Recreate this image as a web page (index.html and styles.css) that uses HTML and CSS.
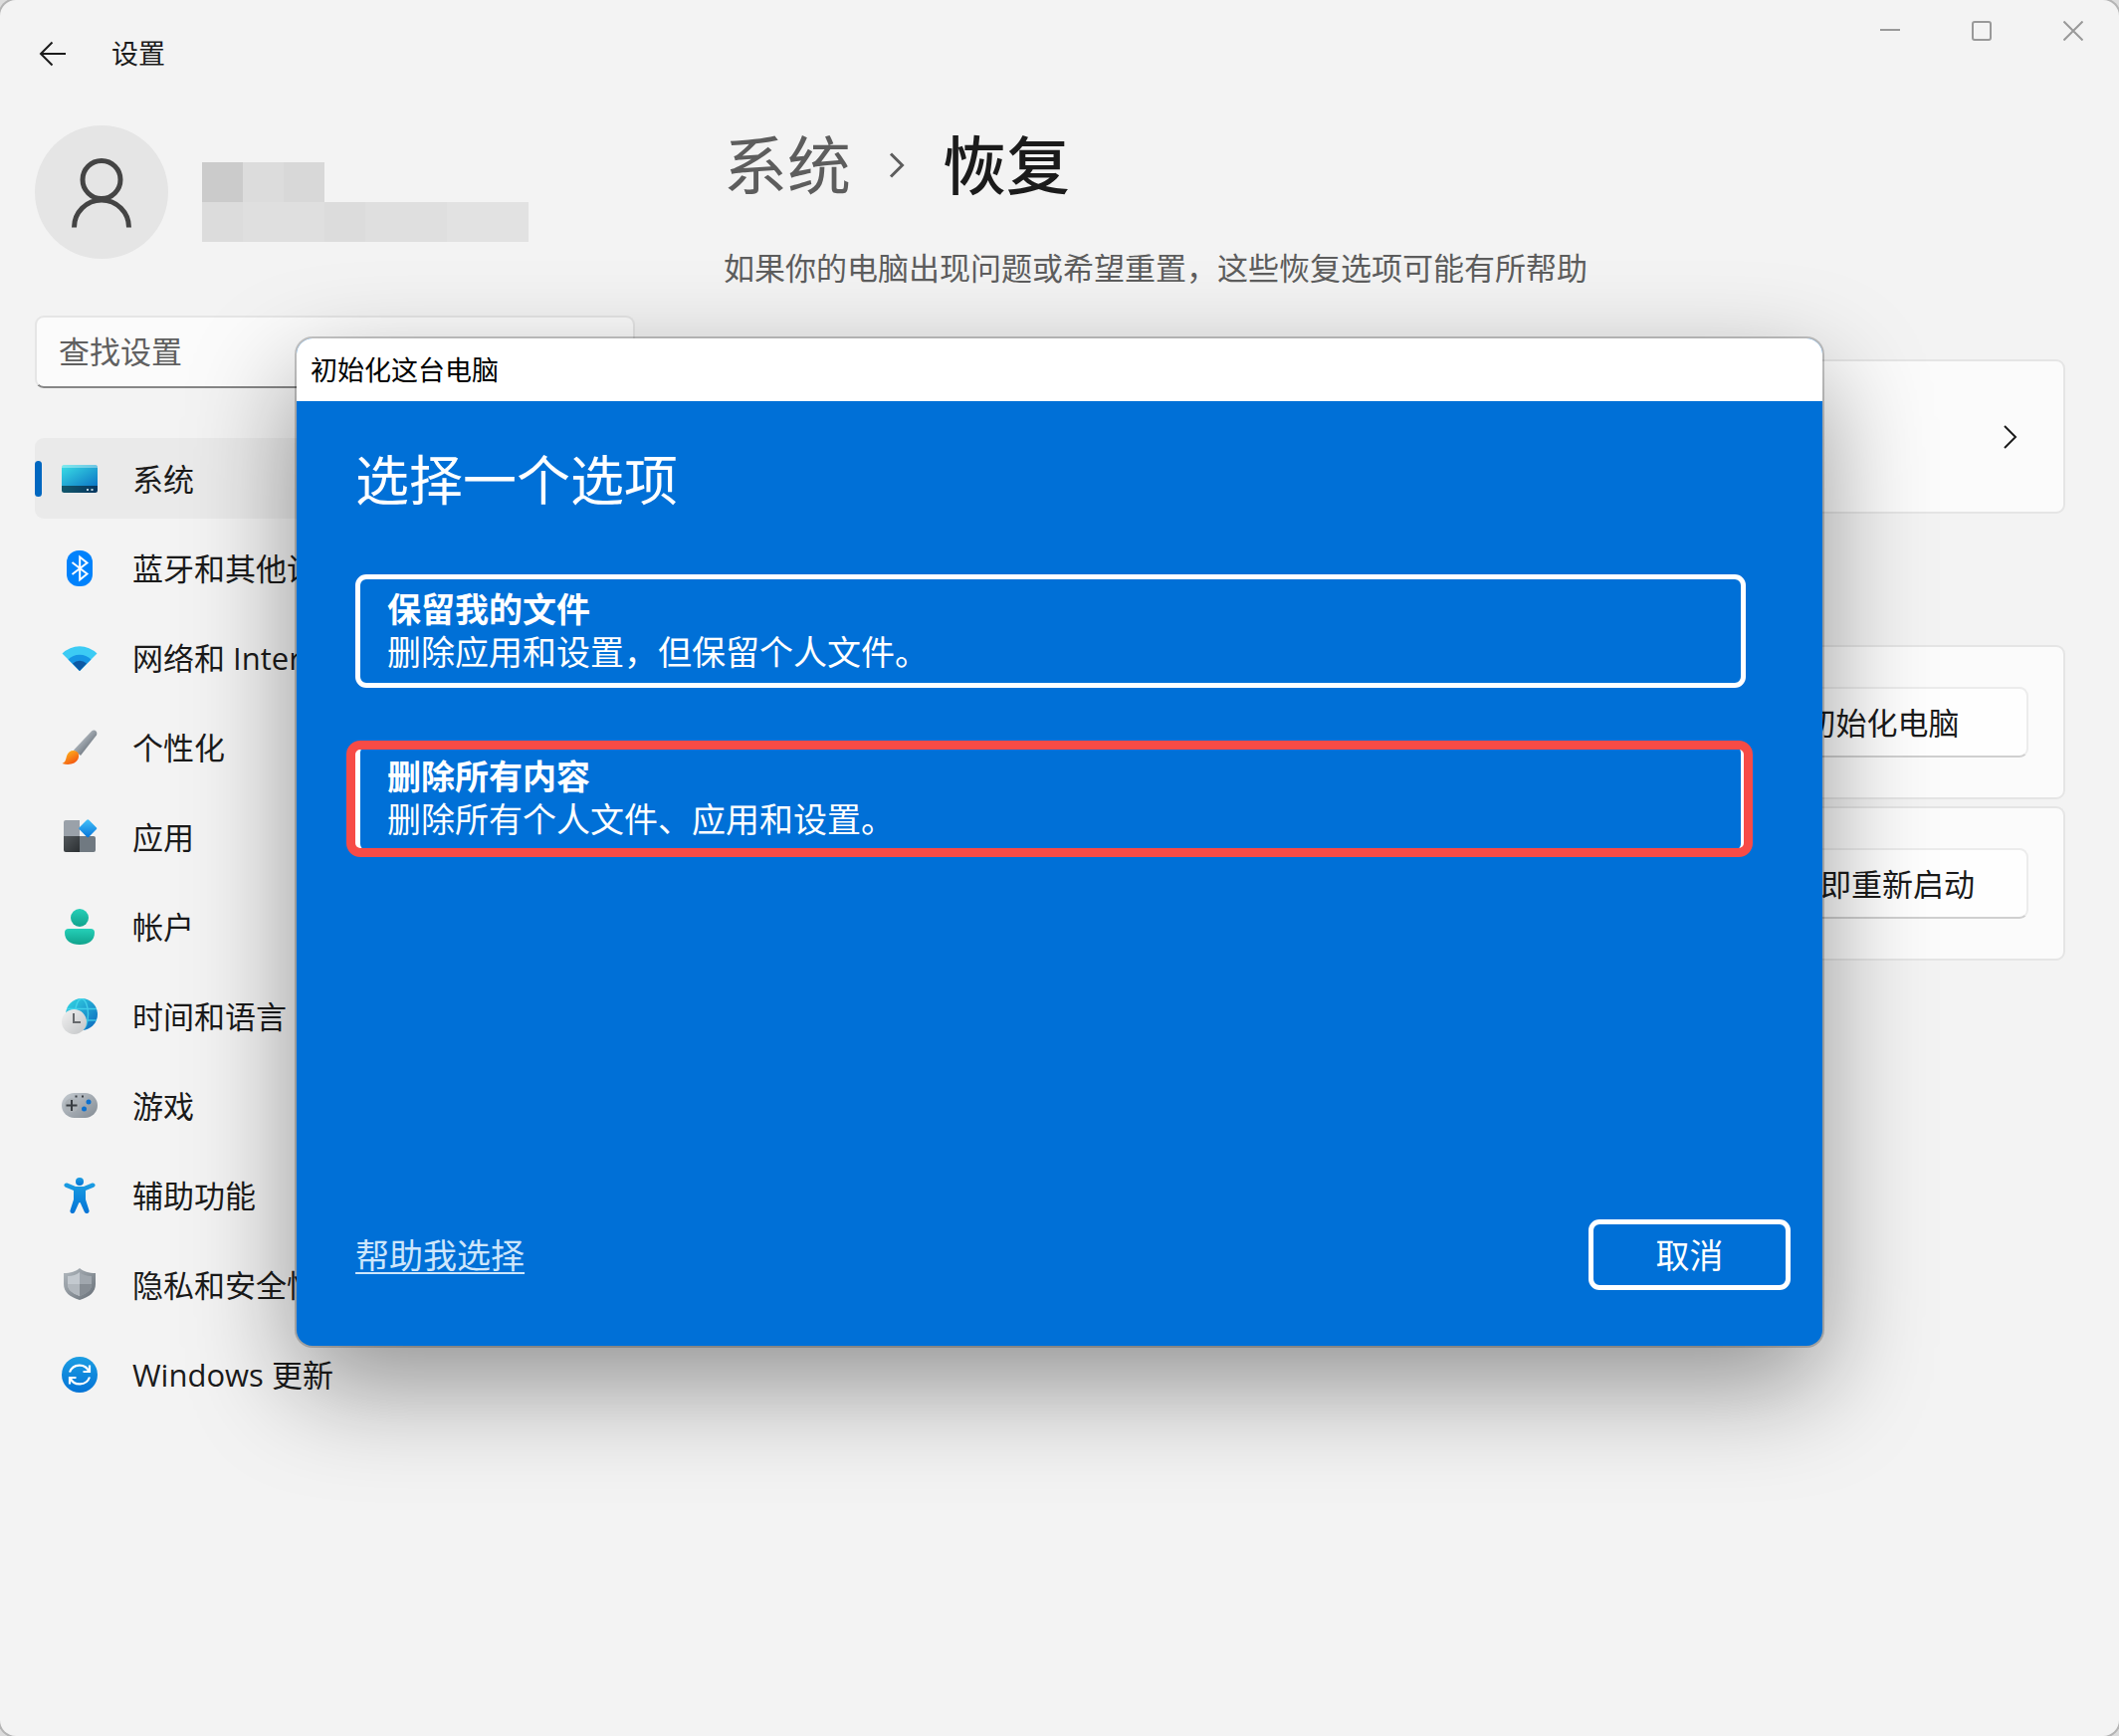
FILE: index.html
```html
<!DOCTYPE html>
<html lang="zh-CN">
<head>
<meta charset="utf-8">
<meta name="viewport" content="width=device-width, initial-scale=1">
<title>设置</title>
<link rel="stylesheet" href="styles.css">
</head>
<body>
<div class="window">
  <header class="titlebar">
    <button class="back" aria-label="返回">
      <svg width="28" height="28" viewBox="0 0 28 28"><path d="M27 14H2M13.500 2.500L2 14l11.500 11.500"/></svg>
    </button>
    <span class="app-name">设置</span>
    <div class="controls">
      <button aria-label="最小化"><svg width="20" height="20" viewBox="0 0 20 20"><path d="M0 9h20"/></svg></button>
      <button aria-label="最大化"><svg width="20" height="20" viewBox="0 0 20 20"><rect x="1" y="1" width="18" height="18" rx="2"/></svg></button>
      <button aria-label="关闭"><svg width="20" height="20" viewBox="0 0 20 20"><path d="M.5.5l19 19M19.500.5l-19 19"/></svg></button>
    </div>
  </header>

  <div class="layout">
    <aside class="sidebar">
      <div class="account">
        <div class="avatar">
          <svg width="64" height="72" viewBox="0 0 64 72"><circle cx="32" cy="23.500" r="19"/><path d="M4.500 71.500a27.500 27.500 0 0 1 55 0"/></svg>
        </div>
        <div class="redacted" aria-hidden="true">
          <div class="redacted-row">
            <i class="t1"></i><i class="t3"></i><i class="t2"></i>
          </div>
          <div class="redacted-row">
            <i class="t3"></i><i class="t4"></i><i class="t4"></i><i class="t3"></i><i class="t4"></i><i class="t4"></i><i class="t5"></i><i class="t5"></i>
          </div>
        </div>
      </div>
      <input class="search" type="text" placeholder="查找设置" aria-label="查找设置">
      <nav class="nav">
        <a href="#" class="active">
          <svg viewBox="0 0 36 36"><defs><linearGradient id="sys" x1="0" y1="0" x2="1" y2="1"><stop offset="0" stop-color="#3be0e6"/><stop offset="1" stop-color="#0b74c4"/></linearGradient><linearGradient id="sysb" x1="0" x2="1" y1="0" y2="0"><stop offset="0" stop-color="#12586c"/><stop offset="1" stop-color="#06365f"/></linearGradient><clipPath id="sysc"><rect y="4" width="36" height="28" rx="2.500"/></clipPath></defs><g clip-path="url(#sysc)"><rect y="4" width="36" height="22" fill="url(#sys)"/><rect y="4" width="36" height="3" fill="#fff" opacity=".35"/><rect y="25" width="36" height="7" fill="url(#sysb)"/></g><path d="M25 28h2v2h-2zM29.500 28h2v2h-2z" fill="#bcd3df"/></svg>
          <span>系统</span>
        </a>
        <a href="#">
          <svg viewBox="0 0 36 36"><rect x="5" width="26" height="36" rx="12" fill="#0082fc"/><path d="M10.500 12l15 11.500-7.300 6V6.500l7.300 6L10.500 24" fill="none" stroke="#fff" stroke-width="2"/></svg>
          <span>蓝牙和其他设备</span>
        </a>
        <a href="#">
          <svg viewBox="0 0 36 36"><path d="M18 31L.5 13.500a25 25 0 0 1 35 0z" fill="#3ccbf4"/><path d="M18 31L6.500 19.500a16.500 16.500 0 0 1 23 0z" fill="#1595e4"/><path d="M18 31l-7-7.500a10.500 10.500 0 0 1 14 0z" fill="#0c59a4"/></svg>
          <span>网络和 Internet</span>
        </a>
        <a href="#">
          <svg viewBox="0 0 36 36"><defs><linearGradient id="br" x1="0" y1="0" x2="1" y2="1"><stop offset=".3" stop-color="#b3bac1"/><stop offset=".7" stop-color="#717a83"/></linearGradient><linearGradient id="fl" x1="0" y1="0" x2=".7" y2="1"><stop offset="0" stop-color="#ffc522"/><stop offset="1" stop-color="#f2520f"/></linearGradient></defs><path d="M30 1.500c3-2.500 6.500.5 5 4L19 26l-7-5.500z" fill="url(#br)"/><path d="M12 21c4.500 1 5.500 3 5 6.500C16 34 7.500 36.500.5 34c3.500-1.500 3.500-4 4.500-7.500C6 23 8.500 21 12 21z" fill="url(#fl)"/></svg>
          <span>个性化</span>
        </a>
        <a href="#">
          <svg viewBox="0 0 36 36"><defs><linearGradient id="ap" x1="0" y1="0" x2="1" y2="1"><stop offset="0" stop-color="#46c3fa"/><stop offset="1" stop-color="#0473d9"/></linearGradient><linearGradient id="ap2" x1="0" y1="0" x2="1" y2="1"><stop offset="0" stop-color="#53585c"/><stop offset="1" stop-color="#2b2f32"/></linearGradient></defs><path d="M2 17V3a2 2 0 0 1 2-2h14v16z" fill="#9aa1a9"/><path d="M18 17h14a2 2 0 0 1 2 2v12a2 2 0 0 1-2 2H18z" fill="#707981"/><path d="M2 17h16v16H4a2 2 0 0 1-2-2z" fill="url(#ap2)"/><rect x="19.500" y="2.500" width="13.500" height="13.500" rx="1.500" transform="rotate(45 26.250 9.250)" fill="url(#ap)"/></svg>
          <span>应用</span>
        </a>
        <a href="#">
          <svg viewBox="0 0 36 36"><defs><linearGradient id="ac" x1="0" y1="0" x2="0" y2="1"><stop offset="0" stop-color="#25d0b8"/><stop offset="1" stop-color="#10a28c"/></linearGradient></defs><circle cx="18" cy="9" r="9" fill="url(#ac)"/><path d="M7 20h22a4 4 0 0 1 4 4c0 8-6 12-15 12S3 32 3 24a4 4 0 0 1 4-4z" fill="url(#ac)"/></svg>
          <span>帐户</span>
        </a>
        <a href="#">
          <svg viewBox="0 0 36 36"><defs><linearGradient id="gl" x1="0" y1="0" x2="1" y2="1"><stop offset="0" stop-color="#35dbe4"/><stop offset="1" stop-color="#0a63bd"/></linearGradient><linearGradient id="ck" x1="0" y1="0" x2="1" y2="1"><stop offset="0" stop-color="#f2f2f2"/><stop offset="1" stop-color="#c2c4c6"/></linearGradient></defs><circle cx="20" cy="16" r="16" fill="url(#gl)"/><g fill="none" stroke="#4fe0f2" stroke-width="1.500" opacity=".7"><ellipse cx="20" cy="16" rx="6.500" ry="15.500"/><path d="M5 10.500h30M5 22h30"/></g><circle cx="12.500" cy="23.500" r="12.500" fill="url(#ck)"/><path d="M12 15v9h7" fill="none" stroke="#66696c" stroke-width="2"/></svg>
          <span>时间和语言</span>
        </a>
        <a href="#">
          <svg viewBox="0 0 36 36"><defs><linearGradient id="gm" x1="0" y1="0" x2="1" y2="1"><stop offset="0" stop-color="#c5cbd1"/><stop offset="1" stop-color="#838b93"/></linearGradient></defs><rect y="5" width="36" height="25" rx="12.500" fill="url(#gm)"/><circle cx="10" cy="17.500" r="7" fill="#aab0b5"/><path d="M4.500 17.500h11M10 12v11" stroke="#383d42" stroke-width="2"/><path d="M13.500 7.500h2v2h-2zM20 7.500h2v2h-2z" fill="#383d42"/><circle cx="27" cy="14" r="2.500" fill="#0b70cf"/><circle cx="22.500" cy="21" r="2.500" fill="#0b70cf"/></svg>
          <span>游戏</span>
        </a>
        <a href="#">
          <svg viewBox="0 0 36 36"><defs><linearGradient id="ax" x1="0" y1="0" x2="0" y2="1"><stop offset="0" stop-color="#1b9de2"/><stop offset="1" stop-color="#0473d6"/></linearGradient></defs><g fill="url(#ax)"><circle cx="18" cy="4" r="4"/><path d="M5.500 5.500L14 9h8l8.500-3.500c3-.8 4.500 3 1.500 4.300L24 13v9l3.500 11c.8 3-3.500 4.300-4.700 1.500L19 26c-.5-1.300-1.500-1.300-2 0l-3.800 8.500C12 37.300 7.700 36 8.500 33L12 22v-9L4 9.800C1 8.500 2.500 4.700 5.500 5.500z"/></g></svg>
          <span>辅助功能</span>
        </a>
        <a href="#">
          <svg viewBox="0 0 36 36"><defs><linearGradient id="sh" x1="0" y1="0" x2="1" y2="1"><stop offset="0" stop-color="#b3bac0"/><stop offset="1" stop-color="#666e76"/></linearGradient></defs><path d="M18 1c4 3.500 9 5 16 5v11c0 8-6 13-16 16C8 30 2 25 2 17V6c7 0 12-1.500 16-5z" fill="url(#sh)"/><path d="M18 5v24C10 26 6 22.500 6 17V9c5 0 9-1.500 12-4z" fill="#c3c9cf"/><path d="M18 5v24c8-3 12-6.500 12-12V9c-5 0-9-1.500-12-4z" fill="#a0a7ae"/><path d="M6 17h12v12C10 26 6 22.500 6 17z" fill="#b2b8be"/><path d="M30 17H18v12c8-3 12-6.500 12-12z" fill="#868d94"/></svg>
          <span>隐私和安全性</span>
        </a>
        <a href="#">
          <svg viewBox="0 0 36 36"><circle cx="18" cy="18" r="18" fill="url(#ax)"/><g fill="none" stroke="#fff" stroke-width="2.200"><path d="M8 15.500a10.500 10.500 0 0 1 19.500-.7M28 20.500a10.500 10.500 0 0 1-19.500.7"/><path d="M28 8.500v6.500h-6.500M8 27.500V21h6.500"/></g></svg>
          <span>Windows 更新</span>
        </a>
      </nav>
    </aside>

    <main class="content">
      <h1 class="crumbs">
        <a href="#">系统</a>
        <svg width="16" height="26" viewBox="0 0 16 26"><path d="M2 1.500L13.500 13 2 24.500"/></svg>
        <span>恢复</span>
      </h1>
      <p class="lead">如果你的电脑出现问题或希望重置，这些恢复选项可能有所帮助</p>
      <a class="card card-link" href="#" aria-label="疑难解答">
        <svg width="14" height="24" viewBox="0 0 14 24"><path d="M1 1l11 11L1 23"/></svg>
      </a>
      <section class="options">
        <div class="card"><button class="action">初始化电脑</button></div>
        <div class="card"><button class="action">立即重新启动</button></div>
      </section>
    </main>
  </div>

  <div class="overlay">
    <div class="dialog" role="dialog" aria-labelledby="dialog-title">
      <div class="dialog-title" id="dialog-title">初始化这台电脑</div>
      <div class="dialog-body">
        <h2>选择一个选项</h2>
        <div class="choices">
          <button class="choice"><strong>保留我的文件</strong><span>删除应用和设置，但保留个人文件。</span></button>
          <button class="choice marked"><strong>删除所有内容</strong><span>删除所有个人文件、应用和设置。</span></button>
        </div>
        <footer class="dialog-footer">
          <a href="#">帮助我选择</a>
          <button class="cancel">取消</button>
        </footer>
      </div>
    </div>
  </div>
</div>
</body>
</html>
```

FILE: styles.css
```css
* {
  box-sizing: border-box;
}

body {
  margin: 0;
  background: #dcdcdc;
  color: #1b1b1b;
  font-family: "Open Sans", "Noto Sans CJK SC", sans-serif;
  font-size: 31px;
  line-height: 44px;
}

button,
input {
  font: inherit;
  color: inherit;
}

button {
  border: 0;
  background: none;
  padding: 0;
}

a {
  color: inherit;
  text-decoration: none;
}

h1,
h2,
p {
  margin: 0;
  font-weight: 400;
}

svg {
  display: block;
  flex: none;
}

.window {
  position: relative;
  min-height: 100vh;
  overflow: hidden;
  border-radius: 16px;
  background: #f3f3f3;
  box-shadow: 0 0 0 2px #b4b4b4;
}

/* Title bar */

.titlebar {
  display: flex;
  align-items: center;
  height: 108px;
  padding-left: 39px;
}

.back svg {
  fill: none;
  stroke: #1b1b1b;
  stroke-width: 2;
}

.app-name {
  margin-left: 45px;
  font-size: 27px;
}

.controls {
  display: flex;
  align-self: flex-start;
  margin-left: auto;
}

.controls button {
  display: grid;
  place-items: center;
  width: 92px;
  height: 62px;
}

.controls svg {
  fill: none;
  stroke: #999;
  stroke-width: 2;
}

/* Page layout */

.layout {
  display: grid;
  grid-template-columns: 603px 1fr;
  column-gap: 89px;
  padding: 18px 54px 0 35px;
}

/* Sidebar */

.account {
  display: flex;
  align-items: center;
  gap: 34px;
}

.avatar {
  display: grid;
  place-items: center;
  width: 134px;
  height: 134px;
  border-radius: 50%;
  background: #e5e5e5;
}

.avatar svg {
  fill: none;
  stroke: #444;
  stroke-width: 5;
}

.redacted {
  padding-top: 20px;
}

.redacted-row {
  display: flex;
}

.redacted-row i {
  width: 41px;
  height: 40px;
}

.t1 { background: #cbcbcb; }
.t2 { background: #d8d8d8; }
.t3 { background: #dcdcdc; }
.t4 { background: #dfdfdf; }
.t5 { background: #e2e2e2; }

.search {
  display: block;
  width: 100%;
  height: 73px;
  margin-top: 57px;
  padding: 0 22px 2px;
  border: 2px solid #e5e5e5;
  border-bottom-color: #868686;
  border-radius: 9px;
  background: #fbfbfb;
}

.search::placeholder {
  color: #606060;
  opacity: 1;
}

.nav {
  display: grid;
  gap: 9px;
  margin-top: 50px;
}

.nav a {
  display: flex;
  align-items: center;
  gap: 35px;
  height: 81px;
  padding-left: 27px;
  border-radius: 9px;
}

.nav svg {
  width: 36px;
  height: 36px;
}

.nav .active {
  position: relative;
  background: #eaeaea;
}

.active::before {
  content: "";
  position: absolute;
  left: 0;
  width: 7px;
  height: 36px;
  border-radius: 4px;
  background: #0067c0;
}

/* Recovery page */

.crumbs {
  display: flex;
  align-items: center;
  gap: 38px;
  height: 80px;
  font-size: 64px;
  line-height: 80px;
}

.crumbs a {
  color: #5d5d5d;
}

.crumbs span {
  font-weight: 500;
}

.crumbs svg {
  fill: none;
  stroke: #5d5d5d;
  stroke-width: 3;
}

.lead {
  margin-top: 41px;
  color: #5d5d5d;
}

.card {
  display: flex;
  align-items: center;
  justify-content: flex-end;
  height: 155px;
  padding-right: 35px;
  border: 2px solid #e5e5e5;
  border-radius: 9px;
  background: #fbfbfb;
}

.card-link {
  margin-top: 70px;
  padding-right: 46px;
}

.card-link svg {
  fill: none;
  stroke: #1b1b1b;
  stroke-width: 2;
}

.options {
  display: grid;
  gap: 7px;
  margin-top: 132px;
}

.action {
  width: 294px;
  height: 71px;
  border: 2px solid #ececec;
  border-bottom-color: #d0d0d0;
  border-radius: 9px;
  background: #fefefe;
}

/* Dialog */

.overlay {
  position: absolute;
  inset: 0;
  display: flex;
  align-items: flex-start;
  justify-content: center;
  padding-top: 340px;
}

.dialog {
  width: 72%;
  overflow: hidden;
  border-radius: 16px;
  background: #0070d7;
  color: #fff;
  box-shadow: 0 0 0 2px rgba(0, 0, 0, .2), 0 40px 107px rgba(0, 0, 0, .4);
}

.dialog-title {
  padding: 0 14px;
  background: #fff;
  color: #000;
  font-size: 27px;
  line-height: 63px;
}

.dialog-body {
  padding: 44px 32px 56px 59px;
}

.dialog-body h2 {
  font-size: 54px;
  line-height: 70px;
}

.choices {
  display: grid;
  gap: 54px;
  margin-top: 60px;
  margin-right: 45px;
}

.choice {
  position: relative;
  display: grid;
  align-content: center;
  height: 114px;
  padding: 0 27px;
  border: 5px solid #fff;
  border-radius: 11px;
  font-size: 34px;
  line-height: 43px;
  text-align: left;
}

/* Annotation frame drawn over the recommended choice */
.marked::after {
  content: "";
  position: absolute;
  inset: -6px -12px -7px -14px;
  border: 9px solid #f74b46;
  border-radius: 14px;
}

.dialog-footer {
  display: flex;
  align-items: center;
  justify-content: space-between;
  margin-top: 366px;
  font-size: 34px;
}

.dialog-footer a {
  color: #cde6fb;
  text-decoration: underline;
  text-decoration-thickness: 2px;
  text-underline-offset: 4px;
}

.cancel {
  width: 203px;
  height: 71px;
  border: 5px solid #fff;
  border-radius: 11px;
}
```
